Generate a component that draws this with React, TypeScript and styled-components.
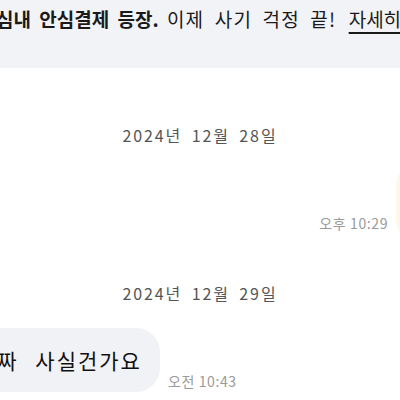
import styled, { createGlobalStyle } from 'styled-components';

const GlobalStyle = createGlobalStyle`
  html, body {
    margin: 0;
    padding: 0;
    background: #ffffff;
  }
  body {
    font-family: "Noto Sans CJK KR", "Noto Sans", sans-serif;
    color: #111;
  }
`;

const Screen = styled.div`
  width: 400px;
  height: 400px;
  overflow: hidden;
  display: flex;
  flex-direction: column;
  background: #ffffff;
`;

const Banner = styled.div`
  height: 68px;
  flex-shrink: 0;
  background: #f2f3f6;
  box-sizing: border-box;
  padding-top: 5px;
  white-space: nowrap;
  overflow: hidden;
  font-size: 19px;
  line-height: 28px;
  color: #1a1a1a;
`;

const BannerText = styled.div`
  margin-left: -4px;
  word-spacing: 4px;
`;

const Strong = styled.span`
  font-weight: 700;
`;

const Plain = styled.span`
  letter-spacing: 1.2px;
  word-spacing: 5px;
`;

const More = styled.span`
  margin-left: 4px;
  text-decoration: underline;
  text-underline-offset: 5px;
  text-decoration-thickness: 1.5px;
`;

const DateDivider = styled.div<{ $gap: number }>`
  margin-top: ${(p) => p.$gap}px;
  height: 24px;
  line-height: 24px;
  text-align: center;
  font-size: 16px;
  letter-spacing: 1.9px;
  word-spacing: 4px;
  color: #555;
`;

const Row = styled.div<{ $gap: number; $mine?: boolean }>`
  margin-top: ${(p) => p.$gap}px;
  display: flex;
  align-items: flex-end;
  justify-content: ${(p) => (p.$mine ? 'flex-end' : 'flex-start')};
  gap: 8px;
`;

const Time = styled.div<{ $lift?: number }>`
  font-size: 14px;
  line-height: 18px;
  color: #9a9a9a;
  letter-spacing: 0.6px;
  white-space: nowrap;
  margin-bottom: ${(p) => p.$lift ?? 2}px;
`;

const MyBubble = styled.div`
  width: 60px;
  height: 76px;
  margin-right: -56px;
  border-radius: 20px;
  background: #fcf9ec;
  flex-shrink: 0;
`;

const TheirBubble = styled.div`
  flex-shrink: 0;
  height: 64px;
  line-height: 64px;
  padding: 0 18px 0 22px;
  margin-left: -46px;
  border-radius: 24px;
  background: #f1f2f5;
  font-size: 21px;
  letter-spacing: 2px;
  word-spacing: 10px;
  white-space: nowrap;
  color: #111;
`;

export default function App() {
  return (
    <>
      <GlobalStyle />
      <Screen>
        <Banner>
          <BannerText>
            <Strong>심내 안심결제 등장.</Strong> <Plain>이제 사기 걱정 끝!</Plain> <More>자세히 보기</More>
          </BannerText>
        </Banner>
        <DateDivider $gap={55}>2024년 12월 28일</DateDivider>
        <Row $gap={18} $mine>
          <Time $lift={9}>오후 10:29</Time>
          <MyBubble />
        </Row>
        <DateDivider $gap={40}>2024년 12월 29일</DateDivider>
        <Row $gap={23}>
          <TheirBubble>진짜 사실건가요</TheirBubble>
          <Time>오전 10:43</Time>
        </Row>
      </Screen>
    </>
  );
}
